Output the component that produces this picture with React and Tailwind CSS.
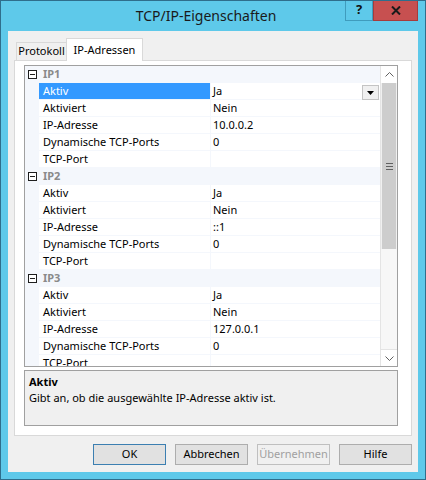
import React from "react";

const font = { fontFamily: '"Noto Sans", "Open Sans", sans-serif' };

const groups = [
  { name: "IP1", rows: [["Aktiv", "Ja", true], ["Aktiviert", "Nein"], ["IP-Adresse", "10.0.0.2"], ["Dynamische TCP-Ports", "0"], ["TCP-Port", ""]] },
  { name: "IP2", rows: [["Aktiv", "Ja"], ["Aktiviert", "Nein"], ["IP-Adresse", "::1"], ["Dynamische TCP-Ports", "0"], ["TCP-Port", ""]] },
  { name: "IP3", rows: [["Aktiv", "Ja"], ["Aktiviert", "Nein"], ["IP-Adresse", "127.0.0.1"], ["Dynamische TCP-Ports", "0"], ["TCP-Port", ""]] },
];

function Minus() {
  return (
    <div className="w-[9px] h-[9px] border border-[#1e1e1e] bg-white flex items-center justify-center">
      <div className="w-[5px] h-px bg-[#1e1e1e]" />
    </div>
  );
}

function Group({ g }) {
  return (
    <>
      <div className="flex h-[17px] bg-[#f4f7fc] shrink-0">
        <div className="w-[14px] flex items-center justify-center shrink-0">
          <Minus />
        </div>
        <div className="pl-[4px] flex items-center text-[11px] font-bold text-[#8a8a8a]">{g.name}</div>
      </div>
      {g.rows.map(([n, v, sel], i) => (
        <div key={i} className="flex h-[17px] shrink-0">
          <div className="w-[14px] shrink-0 bg-[#f4f7fc]" />
          <div className={`w-[171px] shrink-0 pl-[4px] flex items-center text-[11px] border-b border-[#f4f7fc] ${sel ? "bg-[#3399ff] text-white" : "text-black"}`}>{n}</div>
          <div className="w-px bg-[#f4f7fc] shrink-0" />
          <div className="flex-1 flex items-center pl-[2px] text-[11px] text-black border-b border-[#f4f7fc] relative">
            {v}
            {sel && (
              <div className="absolute right-px top-[2px] w-[17px] h-[15px] bg-[#f0f0f0] border border-[#c4c4c4] flex items-center justify-center">
                <svg width="7" height="4" viewBox="0 0 7 4"><path d="M0 0h7L3.5 4z" fill="#000" /></svg>
              </div>
            )}
          </div>
        </div>
      ))}
    </>
  );
}

function Btn({ children, def, disabled }) {
  return (
    <div
      className={`w-[73px] h-[21px] flex items-center justify-center text-[11px] border ${
        def ? "border-[#3c7fb1] bg-[#e1e1e1] text-black" : disabled ? "border-[#bfbfbf] bg-[#f0f0f0] text-[#a0a0a0]" : "border-[#adadad] bg-[#e1e1e1] text-black"
      }`}
    >
      {children}
    </div>
  );
}

export default function App() {
  return (
    <div style={font} className="w-[426px] h-[480px] bg-[#5ec9ea] border border-[#2f6e8c] flex flex-col overflow-hidden">
      <div className="h-[30px] relative flex items-center justify-center shrink-0">
        <span className="text-[14px] text-[#1a1a1a] pb-[1px] pr-[14px]">TCP/IP-Eigenschaften</span>
        <div className="absolute top-[-1px] right-[7px] flex">
          <div className="w-[28px] h-[21px] border border-[#3f9cbd] border-t-0 flex items-center justify-center text-[13px] font-bold text-[#111]">?</div>
          <div className="w-[45px] h-[21px] bg-[#c75050] border border-[#a73b3b] border-t-0 flex items-center justify-center">
            <svg width="10" height="9" viewBox="0 0 10 9"><path d="M1 0.5L9 8.5M9 0.5L1 8.5" stroke="#1a1a1a" strokeWidth="2" /></svg>
          </div>
        </div>
      </div>
      <div className="flex-1 mx-[7px] mb-[7px] bg-[#f0f0f0] flex flex-col px-[6px] pt-[7px]">
        <div className="flex items-end h-[22px] pl-[2px]">
          <div className="h-[18px] w-[50px] border border-[#d9d9d9] border-b-0 border-r-0 bg-[#f0f0f0] text-[11px] flex items-center justify-center text-black">Protokoll</div>
          <div className="h-[23px] w-[77px] -mb-px relative z-10 border border-[#d9d9d9] border-b-0 bg-white text-[11px] flex items-start pt-[3px] justify-center text-black">IP-Adressen</div>
        </div>
        <div className="w-[398px] h-[376px] bg-white border border-[#d9d9d9] flex flex-col pl-[9px] pt-[4px]">
          <div className="w-[374px] h-[302px] border border-[#a0a0a0] flex">
            <div className="flex-1 overflow-hidden flex flex-col">
              {groups.map((g) => (
                <Group key={g.name} g={g} />
              ))}
            </div>
            <div className="w-[17px] bg-[#f0f0f0] flex flex-col border-l border-[#e4e4e4]">
              <div className="h-[17px] bg-white flex items-center justify-center">
                <svg width="9" height="5" viewBox="0 0 9 5"><path d="M0.5 4.5L4.5 0.5L8.5 4.5" stroke="#606060" fill="none" /></svg>
              </div>
              <div className="h-[166px] mx-px bg-[#cdcdcd] flex items-center justify-center">
                <div className="flex flex-col gap-[2px]">
                  <div className="w-[7px] h-px bg-[#606060]" />
                  <div className="w-[7px] h-px bg-[#606060]" />
                  <div className="w-[7px] h-px bg-[#606060]" />
                </div>
              </div>
              <div className="flex-1 bg-[#f7f7f7]" />
              <div className="h-[17px] bg-white border-t border-[#e4e4e4] flex items-center justify-center">
                <svg width="9" height="5" viewBox="0 0 9 5"><path d="M0.5 0.5L4.5 4.5L8.5 0.5" stroke="#606060" fill="none" /></svg>
              </div>
            </div>
          </div>
          <div className="w-[374px] h-[56px] mt-[3px] border border-[#a0a0a0] bg-[#f0f0f0] px-[4px] pt-[3px] flex flex-col">
            <div className="text-[11px] font-bold text-black leading-[16px]">Aktiv</div>
            <div className="text-[11px] text-black leading-[16px]">Gibt an, ob die ausgewählte IP-Adresse aktiv ist.</div>
          </div>
        </div>
        <div className="flex justify-end gap-[9px] mt-[8px] pr-[0px]">
          <Btn def>OK</Btn>
          <Btn>Abbrechen</Btn>
          <Btn disabled>Übernehmen</Btn>
          <Btn>Hilfe</Btn>
        </div>
      </div>
    </div>
  );
}
